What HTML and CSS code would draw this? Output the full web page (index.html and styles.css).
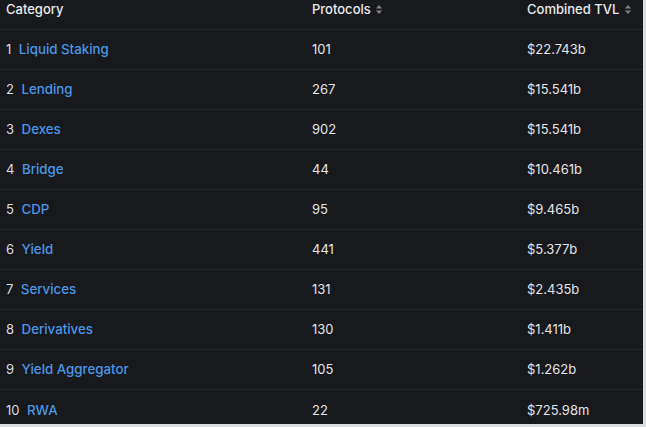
FILE: index.html
```html
<!DOCTYPE html>
<html>
<head>
<meta charset="utf-8">
<link rel="stylesheet" href="styles.css">
</head>
<body>
<div class="panel">
  <div class="row head">
    <div class="c1">Category</div>
    <div class="c2">Protocols <span class="sort"><svg width="8" height="11" viewBox="0 0 8 11"><path d="M4 1 L7.2 4.4 L0.8 4.4 Z M4 10 L7.2 6.6 L0.8 6.6 Z" fill="#7d8088"/></svg></span></div>
    <div class="c3">Combined TVL <span class="sort"><svg width="8" height="11" viewBox="0 0 8 11"><path d="M4 1 L7.2 4.4 L0.8 4.4 Z M4 10 L7.2 6.6 L0.8 6.6 Z" fill="#7d8088"/></svg></span></div>
  </div>
  <div class="row"><div class="c1"><span class="n">1</span><a>Liquid Staking</a></div><div class="c2">101</div><div class="c3">$22.743b</div></div>
  <div class="row"><div class="c1"><span class="n">2</span><a>Lending</a></div><div class="c2">267</div><div class="c3">$15.541b</div></div>
  <div class="row"><div class="c1"><span class="n">3</span><a>Dexes</a></div><div class="c2">902</div><div class="c3">$15.541b</div></div>
  <div class="row"><div class="c1"><span class="n">4</span><a>Bridge</a></div><div class="c2">44</div><div class="c3">$10.461b</div></div>
  <div class="row"><div class="c1"><span class="n">5</span><a>CDP</a></div><div class="c2">95</div><div class="c3">$9.465b</div></div>
  <div class="row"><div class="c1"><span class="n">6</span><a>Yield</a></div><div class="c2">441</div><div class="c3">$5.377b</div></div>
  <div class="row"><div class="c1"><span class="n">7</span><a>Services</a></div><div class="c2">131</div><div class="c3">$2.435b</div></div>
  <div class="row"><div class="c1"><span class="n">8</span><a>Derivatives</a></div><div class="c2">130</div><div class="c3">$1.411b</div></div>
  <div class="row"><div class="c1"><span class="n">9</span><a>Yield Aggregator</a></div><div class="c2">105</div><div class="c3">$1.262b</div></div>
  <div class="row last"><div class="c1"><span class="n">10</span><a>RWA</a></div><div class="c2">22</div><div class="c3">$725.98m</div></div>
</div>
</body>
</html>
```

FILE: styles.css
```css
html, body {
  margin: 0;
  padding: 0;
  background: #dcdde0;
}
body {
  width: 646px;
  height: 427px;
  overflow: hidden;
  font-family: Inter, "Noto Sans", sans-serif;
  font-size: 13px;
  color: #e4e5e7;
}
.panel {
  width: 643px;
  height: 424px;
  background: #18191d;
  overflow: hidden;
}
.row {
  display: grid;
  grid-template-columns: 306px 215px 1fr;
  height: 40px;
  align-items: center;
  padding-left: 6px;
  border-bottom: 1px solid #24262b;
  box-sizing: border-box;
}
.row.head {
  height: 29.5px;
  align-items: start;
  padding-top: 1px;
  font-weight: 500;
  color: #e9eaec;
}
.row.last { border-bottom: none; }
.c1 { display: flex; gap: 7.5px; }
.n { color: #dcdde0; }
a { color: #4a97e6; font-weight: 500; font-size: 13.3px; }
.sort { display: inline-block; vertical-align: -1px; margin-left: 1px; }
```
